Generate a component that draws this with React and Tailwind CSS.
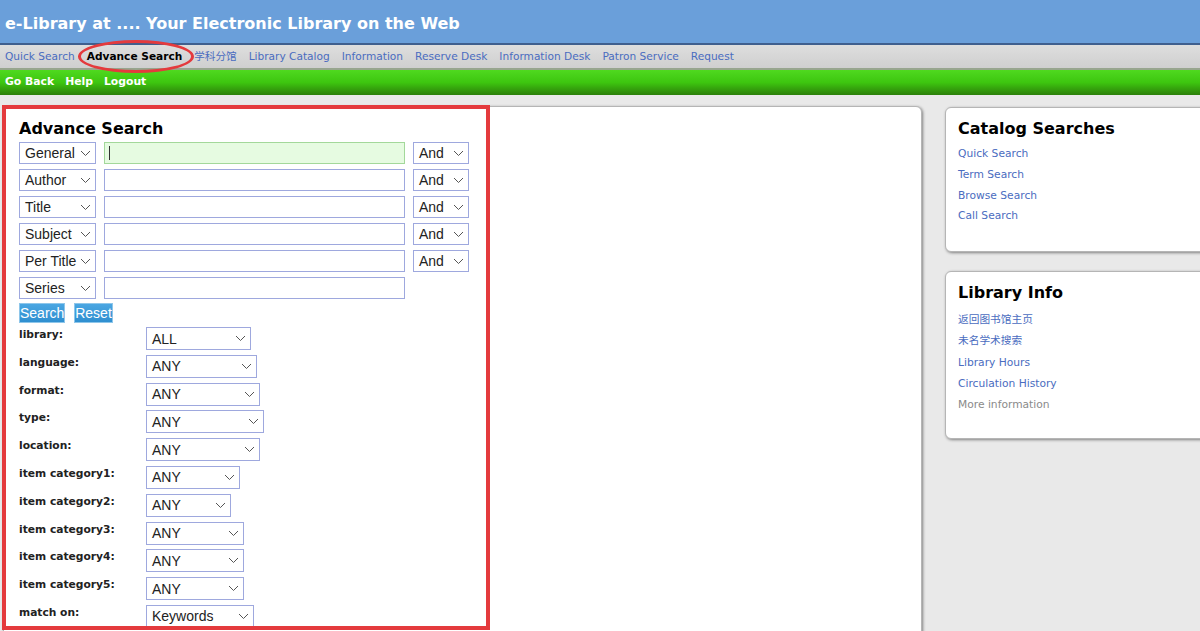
import React from "react";

const Chevron = () => (
  <svg width="11" height="7" viewBox="0 0 11 7" className="shrink-0">
    <path d="M1 1 L5.5 5.5 L10 1" fill="none" stroke="#555" strokeWidth="1" />
  </svg>
);

const Select = ({ label, w, h = "h-[22px]", textCls = "text-[14px]" }) => (
  <div
    className={`${w} ${h} border border-[#9ea8de] bg-white flex items-center justify-between pl-[5px] pr-[4px] shrink-0 ${textCls} text-[#222] font-['Liberation_Sans',Arial,sans-serif]`}
  >
    <span className="whitespace-nowrap leading-none">{label}</span>
    <Chevron />
  </div>
);

const navLinks = [
  "Quick Search",
  "Advance Search",
  "学科分馆",
  "Library Catalog",
  "Information",
  "Reserve Desk",
  "Information Desk",
  "Patron Service",
  "Request",
];

const searchRows = [
  { f: "General", and: true, active: true },
  { f: "Author", and: true },
  { f: "Title", and: true },
  { f: "Subject", and: true },
  { f: "Per Title", and: true },
  { f: "Series", and: false },
];

const filters = [
  { l: "library:", v: "ALL", w: "w-[105px]" },
  { l: "language:", v: "ANY", w: "w-[111px]" },
  { l: "format:", v: "ANY", w: "w-[114px]" },
  { l: "type:", v: "ANY", w: "w-[118px]" },
  { l: "location:", v: "ANY", w: "w-[114px]" },
  { l: "item category1:", v: "ANY", w: "w-[94px]" },
  { l: "item category2:", v: "ANY", w: "w-[85px]" },
  { l: "item category3:", v: "ANY", w: "w-[98px]" },
  { l: "item category4:", v: "ANY", w: "w-[98px]" },
  { l: "item category5:", v: "ANY", w: "w-[98px]" },
  { l: "match on:", v: "Keywords", w: "w-[108px]" },
];

export default function App() {
  return (
    <div className="relative w-[1200px] h-[631px] overflow-hidden bg-[#e9e9e9] font-['DejaVu_Sans',Verdana,sans-serif]">
      {/* header */}
      <div className="h-[43px] bg-[#6a9fda] flex items-center px-[5px] pt-[5px]">
        <h1 className="text-white font-bold text-[16px] leading-none">
          e-Library at .... Your Electronic Library on the Web
        </h1>
      </div>
      {/* nav */}
      <div className="h-[25px] border-t-2 border-[#3f5f8e] bg-gradient-to-b from-[#dedede] to-[#cfcfcf] flex items-center gap-[12px] px-[5px] pt-[1px] text-[10.6px]">
        {navLinks.map((n) =>
          n === "Advance Search" ? (
            <span key={n} className="font-bold text-black">
              {n}
            </span>
          ) : (
            <span key={n} className="text-[#4a6cc0] font-['DejaVu_Sans','Noto_Sans_CJK_SC',sans-serif]">
              {n}
            </span>
          )
        )}
      </div>
      {/* green bar */}
      <div className="h-[27px] border-t-2 border-[#97a58e] bg-gradient-to-b from-[#4fd91f] via-[#3dc60f] to-[#2c800a] flex items-center gap-[11px] px-[5px] text-[10.8px] font-bold text-white">
        <span>Go Back</span>
        <span>Help</span>
        <span>Logout</span>
      </div>

      {/* body */}
      <div className="flex items-start pl-[3px] pt-[11px] gap-[23px]">
        {/* main card */}
        <div className="w-[919px] h-[600px] shrink-0 bg-white rounded-[6px] border border-[#b5b5b5] shadow-[1px_1px_3px_rgba(0,0,0,0.45)] pl-[15px] pt-[12px]">
          <h2 className="text-[16px] font-bold text-black leading-[20px]">Advance Search</h2>
          <div className="mt-[3px] flex flex-col gap-[5px]">
            {searchRows.map((r) => (
              <div key={r.f} className="flex items-center gap-[8px]">
                <Select label={r.f} w="w-[77px]" />
                <div
                  className={`relative w-[301px] h-[22px] border ${
                    r.active ? "border-[#a3d89a] bg-[#e6fbe1]" : "border-[#9ea8de] bg-white"
                  }`}
                >
                  {r.active && (
                    <span className="absolute left-[4px] top-[3px] w-[1px] h-[14px] bg-[#333]" />
                  )}
                </div>
                {r.and && <Select label="And" w="w-[56px]" />}
              </div>
            ))}
          </div>
          <div className="mt-[4px] flex gap-[9px]">
            <button className="w-[46px] h-[20px] bg-gradient-to-b from-[#4aa6e2] to-[#2f8fd0] border border-[#8ec6ea] text-white text-[14px] leading-none font-['Liberation_Sans',Arial,sans-serif]">
              Search
            </button>
            <button className="w-[39px] h-[20px] bg-gradient-to-b from-[#4aa6e2] to-[#2f8fd0] border border-[#8ec6ea] text-white text-[14px] leading-none font-['Liberation_Sans',Arial,sans-serif]">
              Reset
            </button>
          </div>
          <div className="mt-[4px] flex flex-col gap-[4.8px]">
            {filters.map((f) => (
              <div key={f.l} className="flex items-start">
                <div className="w-[127px] shrink-0 text-[10.7px] font-bold text-[#222] leading-[14px] pt-[1px]">
                  {f.l}
                </div>
                <Select label={f.v} w={f.w} h="h-[23px]" textCls="text-[14px]" />
              </div>
            ))}
          </div>
        </div>

        {/* right column */}
        <div className="flex flex-col gap-[19px] pt-[1px]">
          <div className="w-[300px] h-[145px] bg-white rounded-[6px] border border-[#b5b5b5] shadow-[1px_1px_3px_rgba(0,0,0,0.45)] pl-[12px] pt-[11px]">
            <h3 className="text-[16px] font-bold text-black leading-[20px]">Catalog Searches</h3>
            <ul className="mt-[5px] text-[10.7px] text-[#4a6cc0] leading-[20.8px]">
              <li>Quick Search</li>
              <li>Term Search</li>
              <li>Browse Search</li>
              <li>Call Search</li>
            </ul>
          </div>
          <div className="w-[300px] h-[168px] bg-white rounded-[6px] border border-[#b5b5b5] shadow-[1px_1px_3px_rgba(0,0,0,0.45)] pl-[12px] pt-[11px]">
            <h3 className="text-[16px] font-bold text-black leading-[20px]">Library Info</h3>
            <ul className="mt-[6px] text-[10.7px] text-[#4a6cc0] leading-[21.3px] font-['DejaVu_Sans','Noto_Sans_CJK_SC',sans-serif]">
              <li>返回图书馆主页</li>
              <li>未名学术搜索</li>
              <li>Library Hours</li>
              <li>Circulation History</li>
              <li className="text-[#8a8a8a]">More information</li>
            </ul>
          </div>
        </div>
      </div>

      {/* annotations */}
      <div className="absolute left-[78px] top-[40px] w-[116px] h-[33px] rounded-[50%] border-[3px] border-[#e43a3d] pointer-events-none" />
      <div className="absolute left-[2px] top-[105px] w-[488px] h-[525px] border-[4px] border-[#e43a3d] pointer-events-none" />
    </div>
  );
}
